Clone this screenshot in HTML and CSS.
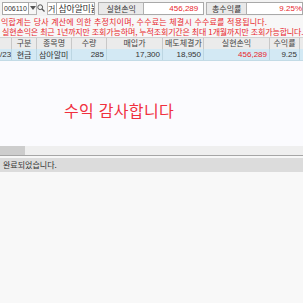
FILE: index.html
```
<!DOCTYPE html>
<html lang="ko">
<head>
    <meta charset="UTF-8">
    <title>실현손익</title>
    <link rel="stylesheet" href="styles.css">
</head>
<body>
    <div class="screen">
        <div class="search-bar">
            <div class="code-input">006110</div>
            <div class="icon-btn arrow-btn">
                <svg width="6" height="4" viewBox="0 0 6 4"><path d="M0 0 H6 L3 4 Z" fill="#555"/></svg>
            </div>
            <div class="icon-btn search-btn">
                <svg width="8" height="8" viewBox="0 0 8 8"><circle cx="3.2" cy="3.2" r="2.4" fill="none" stroke="#555" stroke-width="1"/><path d="M5 5 L7.5 7.5" stroke="#555" stroke-width="1.2"/></svg>
            </div>
            <div class="icon-btn kind-btn">거</div>
            <div class="name-input">삼아알미늄</div>
            <div class="field-label">실현손익</div>
            <div class="field-value profit-value">456,289</div>
            <div class="field-label rate-label">총수익률</div>
            <div class="field-value rate-value">9.25%</div>
        </div>

        <p class="notice notice-first">익합계는 당사 계산에 의한 추정치이며, 수수료는 체결시 수수료를 적용됩니다.</p>
        <p class="notice notice-last">실현손익은 최근 1년까지만 조회가능하며, 누적조회기간은 최대 1개월까지만 조회가능합니다.</p>

        <div class="grid">
            <div class="grid-row grid-head">
                <div class="cell c-date"></div>
                <div class="cell c-kind">구분</div>
                <div class="cell c-name">종목명</div>
                <div class="cell c-qty">수량</div>
                <div class="cell c-buy">매입가</div>
                <div class="cell c-sell">매도체결가</div>
                <div class="cell c-profit">실현손익</div>
                <div class="cell c-rate">수익률</div>
                <div class="cell c-rest"></div>
            </div>
            <div class="grid-row grid-data">
                <div class="cell c-date num">/23</div>
                <div class="cell c-kind">현금</div>
                <div class="cell c-name left">삼아알미</div>
                <div class="cell c-qty num">285</div>
                <div class="cell c-buy num">17,300</div>
                <div class="cell c-sell num">18,950</div>
                <div class="cell c-profit num red">456,289</div>
                <div class="cell c-rate num">9.25</div>
                <div class="cell c-rest"></div>
            </div>
            <div class="grid-empty">
                <p class="thanks">수익 감사합니다</p>
            </div>
        </div>

        <div class="scroll-bar">
            <div class="scroll-thumb"></div>
        </div>
        <div class="status-bar">완료되었습니다.</div>
        <div class="bottom-area"></div>
    </div>
</body>
</html>
```

FILE: styles.css
```
* {
    box-sizing: border-box;
    margin: 0;
    padding: 0;
}

body {
    width: 303px;
    height: 303px;
    overflow: hidden;
    background: #f7f7f7;
    font-family: 'Noto Sans CJK KR', 'Noto Sans', sans-serif;
    font-size: 8px;
    color: #333;
}

.screen {
    width: 303px;
    height: 303px;
    display: flex;
    flex-direction: column;
    overflow: hidden;
}

.search-bar {
    display: flex;
    align-items: center;
    flex: none;
    height: 16px;
    padding: 1px 0 1px 2px;
    background: #f3f3f3;
    white-space: nowrap;
}

.code-input,
.name-input,
.field-value {
    height: 13px;
    line-height: 11px;
    background: #fff;
    border: 1px solid #a9a9a9;
    padding: 0 2px;
}

.code-input {
    width: 28px;
    padding: 0 1px;
    font-size: 7px;
    font-family: 'Liberation Sans', sans-serif;
}

.icon-btn {
    height: 13px;
    display: flex;
    align-items: center;
    justify-content: center;
    border: 1px solid #b5b5b5;
    background: #f6f6f6;
}

.arrow-btn {
    width: 8px;
    border-left: none;
}

.search-btn {
    width: 9px;
    border: none;
    background: transparent;
}

.kind-btn {
    width: 9px;
    margin-left: 1px;
    font-size: 8px;
    background: #fff;
    border-right: none;
}

.name-input {
    width: 41px;
    font-size: 9px;
    overflow: hidden;
    letter-spacing: -0.3px;
}

.field-label {
    width: 47px;
    height: 13px;
    margin-left: 3px;
    line-height: 11px;
    text-align: center;
    background: #e9e9e9;
    border: 1px solid #b0b0b0;
}

.field-value {
    color: #e8262c;
    text-align: right;
    font-family: 'Liberation Sans', sans-serif;
    border-left: none;
}

.profit-value {
    width: 62px;
    padding-right: 5px;
}

.rate-label {
    width: 42px;
    margin-left: 2px;
}

.rate-value {
    flex: none;
    width: 56px;
    padding-right: 0;
    overflow: hidden;
}

.notice {
    flex: none;
    color: #e8262c;
    height: 11px;
    line-height: 11px;
    padding-left: 1px;
    white-space: nowrap;
}

.notice-first {
    letter-spacing: 0.2px;
}

.notice-last {
    height: 10px;
    line-height: 10px;
    padding-left: 2px;
    letter-spacing: -0.15px;
}

.grid {
    flex: none;
    background: #fbfbfe;
    border-top: 1px solid #d2d2d2;
}

.grid-row {
    display: flex;
    height: 11px;
    line-height: 10px;
    white-space: nowrap;
}

.grid-head {
    background: #ebebeb;
    color: #444;
}

.grid-data {
    height: 12px;
    line-height: 12px;
    background: #d3e9f4;
    border-bottom: 1px solid #c3dbe6;
}

.cell {
    flex: none;
    text-align: center;
    border-right: 1px solid #c8c8c8;
    overflow: hidden;
    padding: 0 2px;
}

.grid-data .cell {
    border-right-color: #bcd6e2;
}

.num {
    text-align: right;
    font-family: 'Liberation Sans', sans-serif;
}

.left {
    text-align: left;
}

.red {
    color: #e8262c;
}

.c-date { width: 12px; padding: 0; }
.c-kind { width: 25px; }
.c-name { width: 35px; }
.c-qty { width: 35px; }
.c-buy { width: 56px; }
.c-sell { width: 41px; }
.c-profit { width: 66px; }
.c-rate { width: 30px; }
.c-rest { width: 20px; }

.grid-empty {
    height: 85px;
    padding: 39px 0 0 64px;
}

.thanks {
    color: #f0303e;
    font-size: 16px;
    line-height: 20px;
    letter-spacing: 0.3px;
}

.scroll-bar {
    flex: none;
    display: flex;
    height: 10px;
    background: #efefef;
    border-bottom: 1px solid #a6a6a6;
}

.scroll-thumb {
    width: 25px;
    background: #cdcdcd;
}

.status-bar {
    flex: none;
    margin-top: 2px;
    height: 14px;
    line-height: 14px;
    padding-left: 3px;
    background: #dcdcdc;
    color: #333;
    font-size: 8px;
}

.bottom-area {
    flex: 1;
    background: #f8f8f8;
}
```
